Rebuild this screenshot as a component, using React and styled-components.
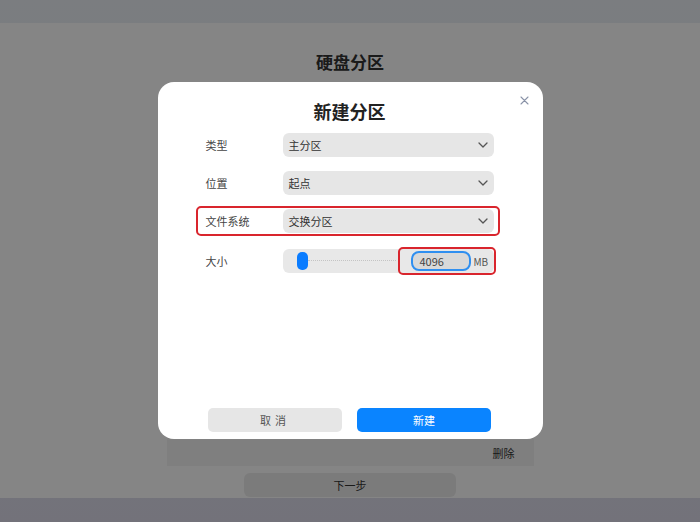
import React from 'react';
import styled, { createGlobalStyle } from 'styled-components';

const GlobalStyle = createGlobalStyle`
  html, body {
    margin: 0;
    padding: 0;
  }
  body {
    width: 700px;
    height: 522px;
    overflow: hidden;
    font-family: "Noto Sans CJK SC", "Noto Sans", sans-serif;
    background: linear-gradient(180deg, #ebf0f6 0%, #dcdbea 100%);
  }
`;

const Screen = styled.div`
  display: flex;
  flex-direction: column;
  height: 522px;
  padding-top: 23px;
  box-sizing: border-box;
`;

const Page = styled.div`
  height: 475px;
  background: #ffffff;
  display: flex;
  flex-direction: column;
  align-items: center;
  box-sizing: border-box;
  padding-top: 28px;
`;

const PageTitle = styled.h1`
  margin: 0;
  font-size: 17px;
  line-height: 22px;
  font-weight: 700;
  color: #333;
`;

const PartitionList = styled.div`
  flex: 1;
  width: 367px;
  margin-top: 10px;
  display: flex;
  flex-direction: column;
  justify-content: flex-end;
  background: #f7f7f7;
`;

const PartitionRow = styled.div`
  height: 26px;
  display: flex;
  align-items: center;
  justify-content: flex-end;
  padding-right: 19px;
  font-size: 11px;
  color: #333;
  background: #f3f3f3;
`;

const NextButton = styled.button`
  width: 212px;
  height: 24px;
  margin: 7px 0 1px;
  border: none;
  border-radius: 6px;
  background: #ececec;
  color: #333;
  font-family: inherit;
  font-size: 11px;
`;

const Overlay = styled.div`
  position: fixed;
  inset: 0;
  background: rgba(0, 0, 0, 0.48);
  display: flex;
  align-items: flex-start;
  justify-content: center;
  padding-top: 82px;
`;

const Modal = styled.div`
  position: relative;
  width: 385px;
  height: 357px;
  background: #ffffff;
  border-radius: 16px;
  box-sizing: border-box;
  padding: 17px 49px 7px 48px;
  display: flex;
  flex-direction: column;
`;

const CloseButton = styled.button`
  position: absolute;
  top: 12px;
  right: 12px;
  width: 12px;
  height: 12px;
  padding: 0;
  border: none;
  background: transparent;
  display: flex;
  align-items: center;
  justify-content: center;
`;

const ModalTitle = styled.h2`
  margin: 0 0 10px;
  text-align: center;
  font-size: 18px;
  line-height: 24px;
  font-weight: 700;
  color: #222;
`;

const Form = styled.div`
  display: flex;
  flex-direction: column;
  gap: 14px;
  flex: 1;
`;

const Row = styled.div`
  position: relative;
  display: grid;
  grid-template-columns: 77px 1fr;
  align-items: center;
  height: 24px;
  margin-top: ${p => (p.$extra ? `${p.$extra}px` : '0')};

  &::after {
    content: '';
    display: ${p => (p.$marked ? 'block' : 'none')};
    position: absolute;
    inset: -3px -6px -3px -10px;
    border: 2px solid #d9252d;
    border-radius: 5px;
    pointer-events: none;
  }
`;

const Label = styled.span`
  font-size: 11px;
  color: #444;
`;

const Select = styled.div`
  height: 24px;
  border-radius: 6px;
  background: #e6e6e6;
  display: flex;
  align-items: center;
  justify-content: space-between;
  padding: 0 6px;
  font-size: 11px;
  color: #333;
`;

const SliderBox = styled.div`
  height: 24px;
  border-radius: 6px;
  background: #e8e8e8;
  display: flex;
  align-items: center;
  padding-left: 14px;
`;

const Thumb = styled.div`
  width: 11px;
  height: 18px;
  border-radius: 5px;
  background: #0a7cff;
  flex: none;
`;

const Track = styled.div`
  width: 88px;
  height: 1px;
  border-top: 1px dotted #c4c4c4;
  flex: none;
`;

const SizeGroup = styled.div`
  position: relative;
  display: flex;
  align-items: center;
  margin-left: 15px;
  gap: 3px;

  &::after {
    content: '';
    position: absolute;
    inset: -4px -8px -4px -13px;
    border: 2px solid #d9252d;
    border-radius: 5px;
    pointer-events: none;
  }
`;

const SizeInput = styled.div`
  width: 60px;
  height: 20px;
  box-sizing: border-box;
  border: 2px solid #2f8ff0;
  border-radius: 8px;
  background: #d9d9d9;
  padding-left: 7px;
  display: flex;
  align-items: center;
  font-size: 11px;
  color: #444;
`;

const Unit = styled.span`
  font-size: 10px;
  color: #555;
`;

const Actions = styled.div`
  display: flex;
  justify-content: center;
  gap: 15px;
`;

const ActionButton = styled.button`
  width: 134px;
  height: 24px;
  border: none;
  border-radius: 5px;
  font-family: inherit;
  font-size: 11px;
  background: ${p => (p.$primary ? '#0a84ff' : '#e6e6e6')};
  color: ${p => (p.$primary ? '#ffffff' : '#555')};
  letter-spacing: ${p => (p.$primary ? '0' : '4px')};
`;

const Chevron = () => (
  <svg width="10" height="6" viewBox="0 0 10 6" fill="none">
    <path d="M1 1l4 4 4-4" stroke="#555" strokeWidth="1.3" strokeLinecap="round" strokeLinejoin="round" />
  </svg>
);

const fields = [
  { label: '类型', value: '主分区' },
  { label: '位置', value: '起点' },
  { label: '文件系统', value: '交换分区', marked: true },
];

export default function App() {
  return (
    <>
      <GlobalStyle />
      <Screen>
        <Page>
          <PageTitle>硬盘分区</PageTitle>
          <PartitionList>
            <PartitionRow>删除</PartitionRow>
          </PartitionList>
          <NextButton>下一步</NextButton>
        </Page>
      </Screen>
      <Overlay>
        <Modal>
          <CloseButton>
            <svg width="9" height="9" viewBox="0 0 9 9">
              <path d="M1 1l7 7M8 1L1 8" stroke="#8a93a8" strokeWidth="1.1" strokeLinecap="round" />
            </svg>
          </CloseButton>
          <ModalTitle>新建分区</ModalTitle>
          <Form>
            {fields.map(f => (
              <Row key={f.label} $marked={f.marked}>
                <Label>{f.label}</Label>
                <Select>
                  <span>{f.value}</span>
                  <Chevron />
                </Select>
              </Row>
            ))}
            <Row $extra={2}>
              <Label>大小</Label>
              <SliderBox>
                <Thumb />
                <Track />
                <SizeGroup>
                  <SizeInput>4096</SizeInput>
                  <Unit>MB</Unit>
                </SizeGroup>
              </SliderBox>
            </Row>
          </Form>
          <Actions>
            <ActionButton>取消</ActionButton>
            <ActionButton $primary>新建</ActionButton>
          </Actions>
        </Modal>
      </Overlay>
    </>
  );
}
